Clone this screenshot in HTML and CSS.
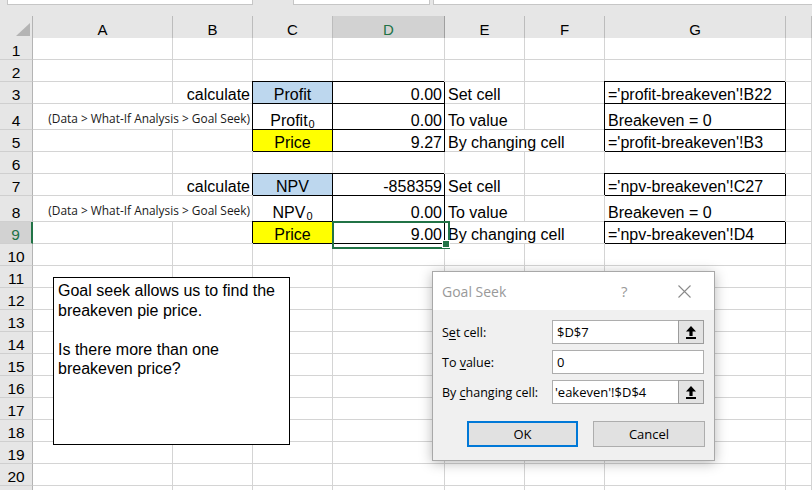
FILE: index.html
```html
<!DOCTYPE html>
<html>
<head>
<meta charset="utf-8">
<link rel="stylesheet" href="styles.css">
</head>
<body>
<div class="topbar">
  <div class="tb tb1"></div>
  <div class="tb tb2"></div>
  <div class="tb tb3"></div>
</div>
<div class="sheet">
  <div class="row hdr">
    <div class="corner"><span class="tri"></span></div>
    <div class="ch">A</div><div class="ch">B</div><div class="ch">C</div><div class="ch selh">D</div><div class="ch">E</div><div class="ch">F</div><div class="ch">G</div><div class="ch"></div>
  </div>
  <div class="row"><div class="rh">1</div><div class="c"></div><div class="c"></div><div class="c"></div><div class="c"></div><div class="c"></div><div class="c"></div><div class="c"></div><div class="c"></div></div>
  <div class="row"><div class="rh">2</div><div class="c"></div><div class="c"></div><div class="c"></div><div class="c"></div><div class="c"></div><div class="c"></div><div class="c"></div><div class="c"></div></div>
  <div class="row"><div class="rh">3</div><div class="c"></div><div class="c r">calculate</div><div class="c m bx blue">Profit</div><div class="c r bx">0.00</div><div class="c">Set cell</div><div class="c"></div><div class="c bx">='profit-breakeven'!B22</div><div class="c"></div></div>
  <div class="row tall"><div class="rh">4</div><div class="c r s2 small">(Data &gt; What-If Analysis &gt; Goal Seek)</div><div class="c m bx">Profit<span class="sub">0</span></div><div class="c r bx">0.00</div><div class="c">To value</div><div class="c"></div><div class="c bx">Breakeven = 0</div><div class="c"></div></div>
  <div class="row"><div class="rh">5</div><div class="c"></div><div class="c"></div><div class="c m bx yellow">Price</div><div class="c r bx">9.27</div><div class="c s2">By changing cell</div><div class="c bx">='profit-breakeven'!B3</div><div class="c"></div></div>
  <div class="row"><div class="rh">6</div><div class="c"></div><div class="c"></div><div class="c"></div><div class="c"></div><div class="c"></div><div class="c"></div><div class="c"></div><div class="c"></div></div>
  <div class="row"><div class="rh">7</div><div class="c"></div><div class="c r">calculate</div><div class="c m bx blue">NPV</div><div class="c r bx">-858359</div><div class="c">Set cell</div><div class="c"></div><div class="c bx">='npv-breakeven'!C27</div><div class="c"></div></div>
  <div class="row tall"><div class="rh">8</div><div class="c r s2 small">(Data &gt; What-If Analysis &gt; Goal Seek)</div><div class="c m">NPV<span class="sub">0</span></div><div class="c r bx">0.00</div><div class="c">To value</div><div class="c"></div><div class="c">Breakeven = 0</div><div class="c"></div></div>
  <div class="row"><div class="rh selr">9</div><div class="c"></div><div class="c"></div><div class="c m bx yellow">Price</div><div class="c r bx sel">9.00</div><div class="c s2">By changing cell</div><div class="c bx">='npv-breakeven'!D4</div><div class="c"></div></div>
  <div class="row"><div class="rh">10</div><div class="c"></div><div class="c"></div><div class="c"></div><div class="c"></div><div class="c"></div><div class="c"></div><div class="c"></div><div class="c"></div></div>
  <div class="row"><div class="rh">11</div><div class="c"></div><div class="c"></div><div class="c"></div><div class="c"></div><div class="c"></div><div class="c"></div><div class="c"></div><div class="c"></div></div>
  <div class="row"><div class="rh">12</div><div class="c"></div><div class="c"></div><div class="c"></div><div class="c"></div><div class="c"></div><div class="c"></div><div class="c"></div><div class="c"></div></div>
  <div class="row"><div class="rh">13</div><div class="c"></div><div class="c"></div><div class="c"></div><div class="c"></div><div class="c"></div><div class="c"></div><div class="c"></div><div class="c"></div></div>
  <div class="row"><div class="rh">14</div><div class="c"></div><div class="c"></div><div class="c"></div><div class="c"></div><div class="c"></div><div class="c"></div><div class="c"></div><div class="c"></div></div>
  <div class="row"><div class="rh">15</div><div class="c"></div><div class="c"></div><div class="c"></div><div class="c"></div><div class="c"></div><div class="c"></div><div class="c"></div><div class="c"></div></div>
  <div class="row"><div class="rh">16</div><div class="c"></div><div class="c"></div><div class="c"></div><div class="c"></div><div class="c"></div><div class="c"></div><div class="c"></div><div class="c"></div></div>
  <div class="row"><div class="rh">17</div><div class="c"></div><div class="c"></div><div class="c"></div><div class="c"></div><div class="c"></div><div class="c"></div><div class="c"></div><div class="c"></div></div>
  <div class="row"><div class="rh">18</div><div class="c"></div><div class="c"></div><div class="c"></div><div class="c"></div><div class="c"></div><div class="c"></div><div class="c"></div><div class="c"></div></div>
  <div class="row"><div class="rh">19</div><div class="c"></div><div class="c"></div><div class="c"></div><div class="c"></div><div class="c"></div><div class="c"></div><div class="c"></div><div class="c"></div></div>
  <div class="row"><div class="rh">20</div><div class="c"></div><div class="c"></div><div class="c"></div><div class="c"></div><div class="c"></div><div class="c"></div><div class="c"></div><div class="c"></div></div>
  <div class="row"><div class="rh"></div><div class="c"></div><div class="c"></div><div class="c"></div><div class="c"></div><div class="c"></div><div class="c"></div><div class="c"></div><div class="c"></div></div>
</div>

<div class="note">
  <p>Goal seek allows us to find the breakeven pie price.</p>
  <p class="gap">Is there more than one breakeven price?</p>
</div>

<div class="dlg">
  <div class="dtitle">
    <span class="dname">Goal Seek</span>
    <span class="dq">?</span>
    <span class="dx"><svg width="13" height="13" viewBox="0 0 13 13"><path d="M0.5 0.5 L12.5 12.5 M12.5 0.5 L0.5 12.5" stroke="#8a8a8a" stroke-width="1.1" fill="none"/></svg></span>
  </div>
  <div class="dbody">
    <div class="lbl"><span>S<u>e</u>t cell:</span></div>
    <div class="field"><div class="inp">$D$7</div><div class="pick"><svg width="10" height="13" viewBox="0 0 10 13"><path d="M5 0 L10 5.5 H6.6 V10 H3.4 V5.5 H0 Z" fill="#000"/><rect x="0" y="11" width="10" height="2" fill="#000"/></svg></div></div>
    <div class="lbl"><span>To <u>v</u>alue:</span></div>
    <div class="field"><div class="inp">0</div></div>
    <div class="lbl"><span>By <u>c</u>hanging cell:</span></div>
    <div class="field"><div class="inp clip">'eakeven'!$D$4</div><div class="pick"><svg width="10" height="13" viewBox="0 0 10 13"><path d="M5 0 L10 5.5 H6.6 V10 H3.4 V5.5 H0 Z" fill="#000"/><rect x="0" y="11" width="10" height="2" fill="#000"/></svg></div></div>
  </div>
  <div class="dbtns">
    <div class="btn ok">OK</div>
    <div class="btn">Cancel</div>
  </div>
</div>
</body>
</html>
```

FILE: styles.css
```css
* { box-sizing: border-box; }
html, body { margin: 0; padding: 0; }
body {
  width: 812px;
  height: 490px;
  overflow: hidden;
  background: #e6e6e6;
  font-family: "Liberation Sans", Arial, sans-serif;
  position: relative;
  color: #000;
}
.topbar { height: 16px; display: flex; align-items: flex-start; }
.tb { height: 5px; background: #fff; border: 1px solid #c6c6c6; border-top: 0; }
.tb1 { margin-left: 7px; width: 246px; }
.tb2 { margin-left: 40px; width: 137px; }
.tb3 { margin-left: 3px; flex: 1; border-right: 0; }

.row {
  display: grid;
  grid-template-columns: 33px 140px 80px 80px 112px 80px 80px 181px 26px;
  height: 22px;
}
.row.tall { height: 26px; }
.row.hdr { height: 22px; }

.corner {
  background: #e6e6e6;
  border-right: 1px solid #b4b4b4;
  border-bottom: 1px solid #ababab;
  display: flex;
  justify-content: flex-end;
  align-items: flex-end;
  padding: 0 2px 3px 0;
}
.tri {
  width: 14px; height: 13px;
  background: #b4b4b4;
  clip-path: polygon(100% 0, 100% 100%, 0 100%);
}
.ch {
  background: #e6e6e6;
  border-right: 1px solid #bcbcbc;
  border-bottom: 1px solid #ababab;
  display: flex;
  justify-content: center;
  align-items: center;
  padding-top: 4px;
  font-size: 15px;
}
.ch.selh {
  background: #d2d2d2;
  color: #217346;
  border-bottom: 2px solid #217346;
  border-right-color: #9f9f9f;
  padding-top: 5px;
}
.rh {
  background: #e6e6e6;
  border-right: 1px solid #b4b4b4;
  border-bottom: 1px solid #cfcfcf;
  display: flex;
  justify-content: center;
  align-items: flex-end;
  padding-bottom: 0;
  font-size: 15.5px;
  line-height: 17px;
}
.rh.selr {
  background: #d2d2d2;
  color: #217346;
  border-right: 2px solid #217346;
}

.c {
  background: #fff;
  border-right: 1px solid #d4d4d4;
  border-bottom: 1px solid #d4d4d4;
  display: flex;
  align-items: flex-end;
  padding: 0 3px 0 3px;
  font-size: 16px;
  line-height: 16px;
  white-space: nowrap;
}
.c.r { justify-content: flex-end; padding-right: 2px; }
.c.m { justify-content: center; }
.c.s2 { grid-column: span 2; }
.c.small {
  font-family: "Open Sans", "Noto Sans", sans-serif;
  font-size: 11.9px;
  color: #1a1a1a;
  align-items: center;
  padding-bottom: 0;
  padding-top: 2px;
}
.c.bx {
  border-right-color: #000;
  border-bottom-color: #000;
  box-shadow: -1px -1px 0 #000;
}
.blue { background: #bdd7ee; }
.yellow { background: #ffff00; }
.sub { font-size: 11px; position: relative; top: 3px; margin-left: 1px; }

.sel { position: relative; }
.sel::after {
  content: "";
  position: absolute;
  left: -1px; top: -1px;
  width: 114px; height: 24px;
  border: 2px solid #217346;
}
.sel::before {
  content: "";
  position: absolute;
  left: 109px; top: 18px;
  width: 6px; height: 6px;
  background: #217346;
  border: 1px solid #fff;
  z-index: 2;
}

.note {
  position: absolute;
  left: 53px; top: 277px;
  width: 237px; height: 168px;
  background: #fff;
  border: 1px solid #000;
  padding: 3px 4px;
  font-size: 16px;
  line-height: 19.5px;
}
.note p { margin: 0; }
.note p.gap { margin-top: 19.5px; }

.dlg {
  position: absolute;
  left: 432px; top: 271px;
  width: 283px; height: 190px;
  background: #f0f0f0;
  border: 1px solid #a8a8a8;
  box-shadow: 0 2px 12px rgba(0,0,0,0.28);
  font-family: "Open Sans", "Noto Sans", sans-serif;
  font-size: 12.5px;
  color: #000;
}
.dtitle {
  height: 38px;
  background: #fff;
  display: flex;
  align-items: center;
  padding-left: 9px;
  color: #999;
}
.dname { font-size: 14px; width: 179px; }
.dq { font-size: 15px; width: 57px; }
.dx { display: flex; }
.dbody {
  display: grid;
  grid-template-columns: 110px 152px;
  row-gap: 6px;
  padding: 10px 0 0 9px;
}
.lbl { height: 24px; display: flex; align-items: center; white-space: pre; }
.lbl u { text-underline-offset: 2px; }
.field {
  height: 24px;
  display: flex;
  background: #fff;
  border: 1px solid #adadad;
}
.inp {
  flex: 1;
  display: flex;
  align-items: center;
  padding-left: 4px;
  font-size: 13px;
  overflow: hidden;
  white-space: nowrap;
}
.inp.clip { padding-left: 2px; }
.pick {
  width: 26px;
  margin: -1px -1px -1px 0;
  background: #e3e3e3;
  border: 1px solid #9c9c9c;
  display: flex;
  justify-content: center;
  align-items: center;
}
.dbtns {
  display: flex;
  justify-content: flex-end;
  gap: 15px;
  padding: 17px 9px 0 0;
}
.btn {
  width: 112px; height: 26px;
  background: #e1e1e1;
  border: 1px solid #adadad;
  display: flex;
  justify-content: center;
  align-items: center;
  font-size: 13px;
}
.btn.ok { width: 111px; border: 2px solid #0078d7; }
```
